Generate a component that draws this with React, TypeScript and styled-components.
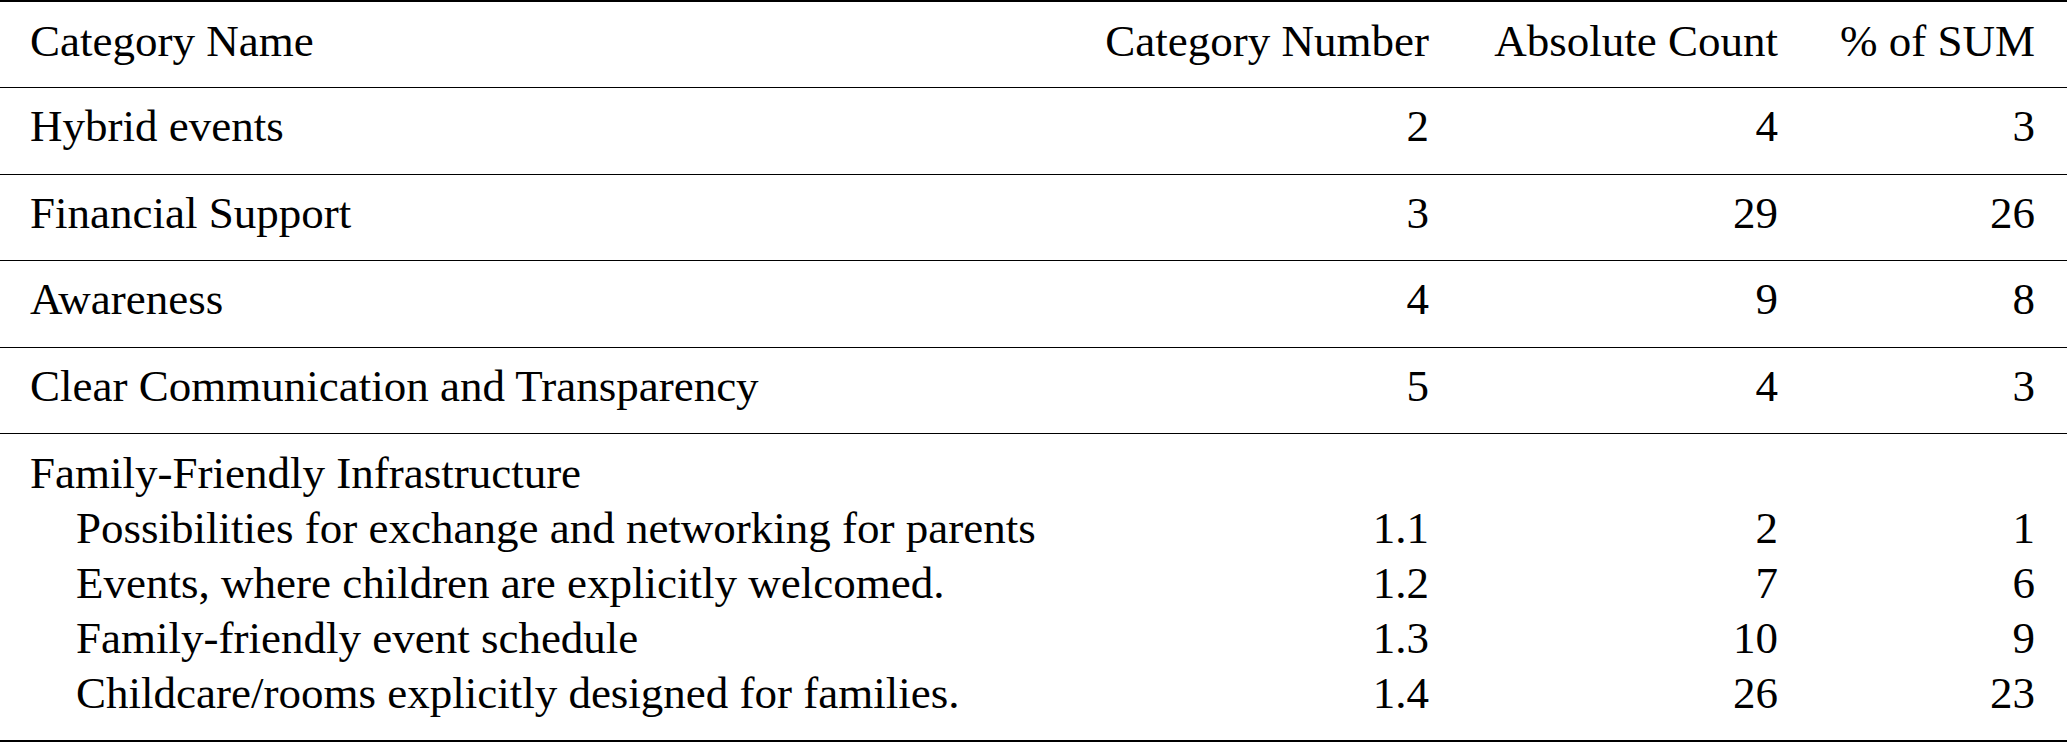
import React from 'react';
import styled, { createGlobalStyle } from 'styled-components';

const GlobalStyle = createGlobalStyle`
  html, body {
    margin: 0;
    padding: 0;
    background: #ffffff;
  }
  body {
    font-family: "Liberation Serif", "Times New Roman", Times, serif;
    color: #000000;
  }
`;

const Table = styled.table`
  width: 2067px;
  table-layout: fixed;
  border-collapse: separate;
  border-spacing: 0;
  font-family: "Liberation Serif", "Times New Roman", Times, serif;
  font-size: 45px;
  line-height: 55px;
  color: #000;
`;

const Col = styled.col<{ $w?: number }>`
  width: ${(p) => (p.$w ? `${p.$w}px` : 'auto')};
`;

const Cell = styled.td<{ $right?: boolean; $indent?: boolean }>`
  padding: 0 32px 0 ${(p) => (p.$indent ? 76 : 30)}px;
  text-align: ${(p) => (p.$right ? 'right' : 'left')};
  white-space: nowrap;
  font-family: "Liberation Serif", "Times New Roman", Times, serif;
  font-weight: normal;
`;

const HeadRow = styled.tr`
  & > * {
    border-top: 2px solid #000;
    padding-top: 11.5px;
    padding-bottom: 18.5px;
  }
`;

const BodyRow = styled.tr`
  & > td {
    border-top: 1px solid #000;
    padding-top: 11px;
    padding-bottom: 19.5px;
  }
`;

const GroupTitleRow = styled.tr`
  & > td {
    border-top: 1px solid #000;
    padding-top: 12.3px;
  }
`;

const GroupItemRow = styled.tr<{ $last?: boolean }>`
  & > td {
    padding-bottom: ${(p) => (p.$last ? '18.7px' : '0')};
    border-bottom: ${(p) => (p.$last ? '2px solid #000' : 'none')};
  }
`;

type Entry = { name: string; num: string; count: number; pct: number };

const mainRows: Entry[] = [
  { name: 'Hybrid events', num: '2', count: 4, pct: 3 },
  { name: 'Financial Support', num: '3', count: 29, pct: 26 },
  { name: 'Awareness', num: '4', count: 9, pct: 8 },
  { name: 'Clear Communication and Transparency', num: '5', count: 4, pct: 3 },
];

const familyRows: Entry[] = [
  { name: 'Possibilities for exchange and networking for parents', num: '1.1', count: 2, pct: 1 },
  { name: 'Events, where children are explicitly welcomed.', num: '1.2', count: 7, pct: 6 },
  { name: 'Family-friendly event schedule', num: '1.3', count: 10, pct: 9 },
  { name: 'Childcare/rooms explicitly designed for families.', num: '1.4', count: 26, pct: 23 },
];

export default function App() {
  return (
    <>
      <GlobalStyle />
      <Table>
        <colgroup>
          <Col />
          <Col $w={386} />
          <Col $w={349} />
          <Col $w={257} />
        </colgroup>
        <thead>
          <HeadRow>
            <Cell as="th">Category Name</Cell>
            <Cell as="th" $right>Category Number</Cell>
            <Cell as="th" $right>Absolute Count</Cell>
            <Cell as="th" $right>% of SUM</Cell>
          </HeadRow>
        </thead>
        <tbody>
          {mainRows.map((r) => (
            <BodyRow key={r.num}>
              <Cell>{r.name}</Cell>
              <Cell $right>{r.num}</Cell>
              <Cell $right>{r.count}</Cell>
              <Cell $right>{r.pct}</Cell>
            </BodyRow>
          ))}
          <GroupTitleRow>
            <Cell>Family-Friendly Infrastructure</Cell>
            <Cell />
            <Cell />
            <Cell />
          </GroupTitleRow>
          {familyRows.map((r, i) => (
            <GroupItemRow key={r.num} $last={i === familyRows.length - 1}>
              <Cell $indent>{r.name}</Cell>
              <Cell $right>{r.num}</Cell>
              <Cell $right>{r.count}</Cell>
              <Cell $right>{r.pct}</Cell>
            </GroupItemRow>
          ))}
        </tbody>
      </Table>
    </>
  );
}
